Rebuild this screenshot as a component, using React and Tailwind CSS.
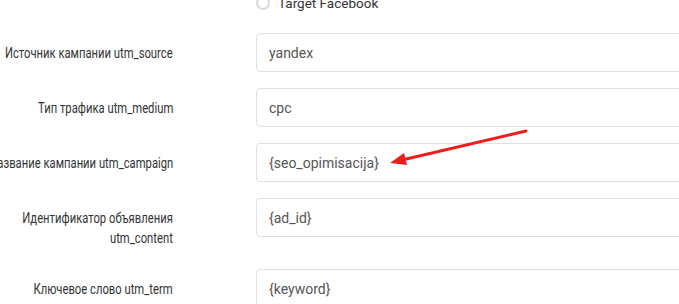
import React from "react";

const rows = [
  { lines: ["Источник кампании utm_source"], value: "yandex" },
  { lines: ["Тип трафика utm_medium"], value: "cpc" },
  { lines: ["Название кампании utm_campaign"], value: "{seo_opimisacija}" },
  { lines: ["Идентификатор объявления", "utm_content"], value: "{ad_id}" },
  { lines: ["Ключевое слово utm_term"], value: "{keyword}" },
];

export default function App() {
  return (
    <div className="relative w-[679px] h-[304px] overflow-hidden bg-white font-[Roboto] text-[14px] leading-[20px]">
      <div className="-mt-[7px] mb-[20px] ml-[256px] flex h-[20px] items-center gap-[8px] text-[13.5px] text-[#333]">
        <span className="box-border h-[14px] w-[14px] shrink-0 rounded-full border-2 border-[#d9d9d9] bg-white"></span>
        <span>Target Facebook</span>
      </div>
      {rows.map((r, i) => (
        <div key={i} className="mb-[16px] flex items-start">
          <div className="flex w-[173px] shrink-0 flex-col items-end pt-[10px] pb-[5px] font-[Roboto] text-[15px] text-[#333]">
            {r.lines.map((l, j) => (
              <span key={j} className="block whitespace-nowrap origin-right scale-x-[0.75]">
                {l}
              </span>
            ))}
          </div>
          <div className="ml-[83px] box-border flex h-[39px] w-[460px] shrink-0 items-center rounded-[4px] border border-[#e0e0e0] bg-white pl-[12px] text-[#555]">
            {r.value}
          </div>
        </div>
      ))}
      <svg className="absolute left-0 top-0" width="679" height="304" viewBox="0 0 679 304">
        <line x1="526" y1="131" x2="402" y2="160" stroke="#f01c1c" strokeWidth="3" strokeLinecap="round" />
        <polygon points="390,163 404,153 407,165" fill="#f01c1c" />
      </svg>
    </div>
  );
}
